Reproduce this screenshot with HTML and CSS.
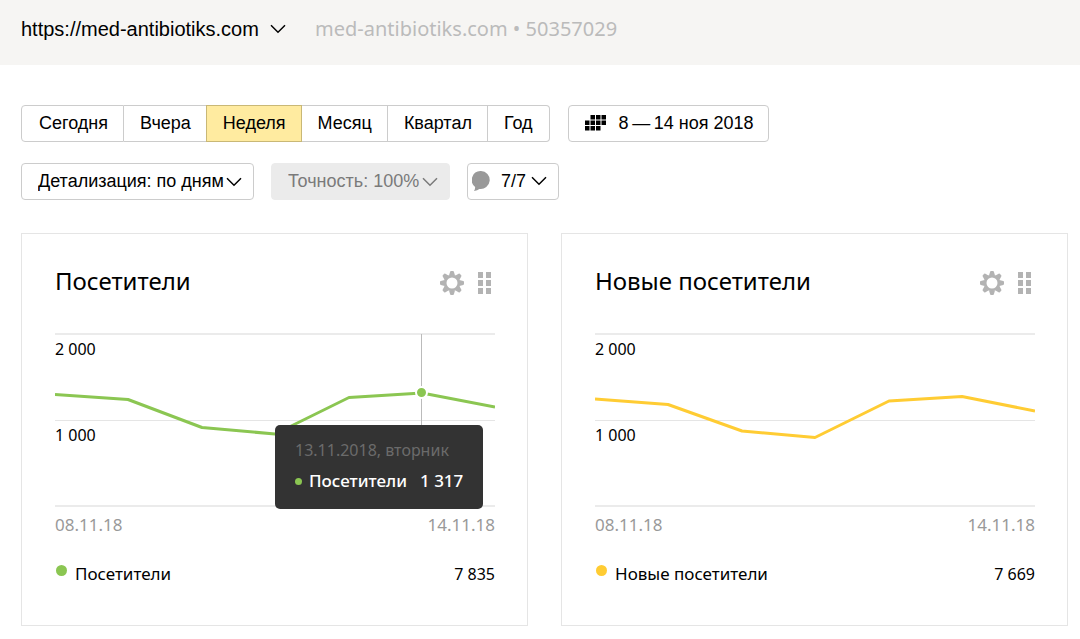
FILE: index.html
```html
<!DOCTYPE html>
<html lang="ru">
<head>
<meta charset="utf-8">
<meta name="viewport" content="width=device-width, initial-scale=1">
<title>Метрика — med-antibiotiks.com</title>
<link rel="stylesheet" href="styles.css">
</head>
<body>
<svg class="sprite" width="0" height="0" aria-hidden="true">
  <symbol id="chevron" viewBox="0 0 16 10"><path d="M1 1.2 8 8.2 15 1.2" fill="none" stroke="currentColor" stroke-width="1.5"/></symbol>
  <symbol id="gear" viewBox="-12 -12 24 24">
    <circle r="6.900" fill="none" stroke="currentColor" stroke-width="2.8"/>
    <g fill="currentColor">
      <path id="tooth" d="M-3-7.4-1.9-11.2Q-1.700-12-1-12H1Q1.700-12 1.9-11.2L3-7.4Z"/>
      <use href="#tooth" transform="rotate(45)"/><use href="#tooth" transform="rotate(90)"/>
      <use href="#tooth" transform="rotate(135)"/><use href="#tooth" transform="rotate(180)"/>
      <use href="#tooth" transform="rotate(225)"/><use href="#tooth" transform="rotate(270)"/>
      <use href="#tooth" transform="rotate(315)"/>
    </g>
  </symbol>
  <symbol id="grip" viewBox="0 0 13 22"><path fill="currentColor" d="M0 0h5v6H0zM8 0h5v6H8zM0 8h5v6H0zM8 8h5v6H8zM0 16h5v6H0zM8 16h5v6H8z"/></symbol>
</svg>

<header class="site-bar">
  <div class="picker picker-site">
    <select class="picker-control" aria-label="Сайт"><option>https://med-antibiotiks.com</option></select>
    <svg class="chevron"><use href="#chevron"/></svg>
  </div>
  <div class="counter">med-antibiotiks.com • 50357029</div>
</header>

<main class="page">
  <div class="toolbar">
    <div class="segments" role="group" aria-label="Период">
      <button class="segment" type="button">Сегодня</button>
      <button class="segment" type="button">Вчера</button>
      <button class="segment segment-active" type="button" aria-pressed="true">Неделя</button>
      <button class="segment" type="button">Месяц</button>
      <button class="segment" type="button">Квартал</button>
      <button class="segment" type="button">Год</button>
    </div>
    <button class="box date-range" type="button">
      <svg width="21" height="16" viewBox="0 0 21 16" aria-hidden="true"><path d="M5.500 0h4.500v4.500h-4.500zM11 0h4.500v4.500H11zM16.500 0H21v4.500h-4.500zM0 5.500h4.500V10H0zM5.500 5.500H10V10H5.500zM11 5.500h4.500V10H11zM16.500 5.500H21V10h-4.500zM0 11h4.500v4.500H0zM5.500 11H10v4.500H5.500zM11 11h4.500v4.500H11z"/></svg>
      <span>8&thinsp;—&thinsp;14 ноя 2018</span>
    </button>
  </div>

  <div class="toolbar">
    <div class="picker">
      <select class="picker-control box" aria-label="Детализация"><option>Детализация: по дням</option></select>
      <svg class="chevron"><use href="#chevron"/></svg>
    </div>
    <div class="picker picker-disabled">
      <select class="picker-control box" aria-label="Точность" disabled><option>Точность: 100%</option></select>
      <svg class="chevron"><use href="#chevron"/></svg>
    </div>
    <button class="box notes" type="button" aria-haspopup="true">
      <svg width="18" height="20" viewBox="0 0 18 20" aria-hidden="true"><path fill="#999" d="M9 0a9 9 0 1 1-1.600 17.900Q5.500 19.500 2 20 3.300 18.300 3.100 16A9 9 0 0 1 9 0Z"/></svg>
      <span>7/7</span>
      <svg class="chevron"><use href="#chevron"/></svg>
    </button>
  </div>

  <div class="cards">
    <section class="card card-green">
      <header class="card-head">
        <h2 class="card-title">Посетители</h2>
        <button class="icon-button" type="button" aria-label="Настройки"><svg width="24" height="24"><use href="#gear"/></svg></button>
        <button class="icon-button" type="button" aria-label="Переместить"><svg width="13" height="22"><use href="#grip"/></svg></button>
      </header>
      <div class="chart">
        <div class="band">2 000</div>
        <div class="band">1 000</div>
        <div class="cursor"></div>
        <svg class="plot" viewBox="0 0 440 174" preserveAspectRatio="none" role="img" aria-label="График посетителей"><polyline points="0,61.500 73,66.500 147,94.500 220,101 294,64.500 367,60 440,74"/></svg>
        <div class="marker"></div>
        <div class="tooltip" role="tooltip">
          <div class="tooltip-date">13.11.2018, вторник</div>
          <div class="tooltip-row"><span class="tooltip-dot"></span><span>Посетители</span><span class="tooltip-value">1 317</span></div>
        </div>
      </div>
      <div class="dates"><span>08.11.18</span><span>14.11.18</span></div>
      <div class="legend"><span class="dot"></span><span class="name">Посетители</span><span class="total">7 835</span></div>
    </section>

    <section class="card card-yellow">
      <header class="card-head">
        <h2 class="card-title">Новые посетители</h2>
        <button class="icon-button" type="button" aria-label="Настройки"><svg width="24" height="24"><use href="#gear"/></svg></button>
        <button class="icon-button" type="button" aria-label="Переместить"><svg width="13" height="22"><use href="#grip"/></svg></button>
      </header>
      <div class="chart">
        <div class="band">2 000</div>
        <div class="band">1 000</div>
        <svg class="plot" viewBox="0 0 440 174" preserveAspectRatio="none" role="img" aria-label="График новых посетителей"><polyline points="0,66 73,71.500 147,98 220,104.500 294,68 367,63.500 440,78"/></svg>
      </div>
      <div class="dates"><span>08.11.18</span><span>14.11.18</span></div>
      <div class="legend"><span class="dot"></span><span class="name">Новые посетители</span><span class="total">7 669</span></div>
    </section>
  </div>
</main>
</body>
</html>
```

FILE: styles.css
```css
* { box-sizing: border-box; }

body {
  margin: 0;
  background: #fff;
  color: #000;
  font: 16px/24px "Noto Sans", "Open Sans", sans-serif;
}

.sprite { position: absolute; }

button, select {
  margin: 0;
  padding: 0;
  border: 0;
  background: none;
  color: inherit;
  font: 18px/24px "Liberation Sans", Arial, sans-serif;
  appearance: none;
  cursor: pointer;
}

.chevron { width: 16px; height: 10px; }

.site-bar {
  display: flex;
  align-items: center;
  gap: 29px;
  min-height: 65px;
  padding: 0 21px 8px;
  background: #f6f5f3;
}

.counter { color: #bbb; font-size: 20px; }

/* A select with its own arrow laid over the right padding. */
.picker { display: grid; align-items: center; }
.picker > * { grid-area: 1 / 1; }
.picker .chevron { justify-self: end; margin-right: 12px; pointer-events: none; }
.picker .box { padding: 0 29px 2px 16px; }
.picker-site .picker-control { padding-right: 27px; font-size: 20px; }
.picker-site .chevron { margin-right: 0; }

.picker-disabled { color: #7a7a7a; }
.picker-disabled .box { border-color: #ebebeb; background: #ebebeb; opacity: 1; color: inherit; }

.page { padding: 40px 12px 13px 21px; }

.toolbar { display: flex; gap: 17px; margin-bottom: 21px; }

.box {
  height: 37px;
  border: 1px solid #ccc;
  border-radius: 4px;
}

.segments { display: flex; margin-right: 1px; }

.segment {
  height: 37px;
  padding: 0 15px 2px 16px;
  border: 1px solid #ccc;
  border-left-width: 0;
}
.segment:first-child { padding-left: 17px; border-left-width: 1px; border-radius: 4px 0 0 4px; }
.segment:last-child { padding-right: 16px; border-radius: 0 4px 4px 0; }
.segment-active {
  margin-left: -1px;
  border: 1px solid #c9b876;
  background: #ffeba0;
}

.date-range { display: flex; align-items: center; gap: 13px; padding: 0 14px 2px 16px; }
.notes { display: flex; align-items: center; padding: 0 11px 2px 4px; gap: 5px; }
.notes span { padding-left: 6px; }

.cards {
  display: grid;
  grid-template-columns: repeat(auto-fit, minmax(400px, 1fr));
  gap: 33px;
  padding-top: 12px;
}

.card { padding: 33px 32px 39px 33px; border: 1px solid #e5e5e5; }
.card-green { --series: #8bc652; }
.card-yellow { --series: #ffcc33; }

.card-head { display: flex; align-items: center; gap: 14px; padding-right: 4px; }
.card-title { flex: 1; margin: 0; padding-bottom: 4px; font-size: 24px; line-height: 28px; font-weight: 400; }
.icon-button { display: flex; color: #b3b3b3; }

.chart {
  position: relative;
  margin-top: 34px;
  border-bottom: 2px solid #ebebeb;
}
.band { height: 85px; padding-top: 2px; border-top: 1px solid #e5e5e5; }
.band:first-child { height: 87px; border-top: 2px solid #ebebeb; }

.plot {
  position: absolute;
  inset: 0;
  width: 100%;
  height: 174px;
}
.plot polyline {
  fill: none;
  stroke: var(--series);
  stroke-width: 3;
  stroke-linejoin: round;
  vector-effect: non-scaling-stroke;
}

.cursor, .marker { position: absolute; left: 83%; }
.cursor { top: 1px; bottom: 0; width: 1px; margin-left: 1px; background: #bbb; }
.marker {
  top: 53px;
  width: 13px;
  height: 13px;
  margin-left: -5px;
  border: 2px solid #fff;
  border-radius: 50%;
  background: var(--series);
}

.tooltip {
  position: absolute;
  top: 92px;
  left: 50%;
  padding: 13px 20px 16px;
  border-radius: 5px;
  background: #333;
  color: #fff;
  white-space: nowrap;
}
.tooltip-date { color: #6b6b6b; }
.tooltip-row { display: flex; align-items: center; margin-top: 7px; font-size: 17px; font-weight: 500; }
.tooltip-dot { width: 7px; height: 7px; margin-right: 7px; border-radius: 50%; background: var(--series); }
.tooltip-value { margin-left: auto; padding-left: 13px; }

.dates { display: flex; justify-content: space-between; margin-top: 6px; color: #999; font-size: 17px; }

.legend { display: flex; margin-top: 25px; }
.name { font-size: 17px; }
.dot { width: 11px; height: 11px; margin: 3px 8px 0 1px; border-radius: 50%; background: var(--series); }
.total { margin-left: auto; }
```
